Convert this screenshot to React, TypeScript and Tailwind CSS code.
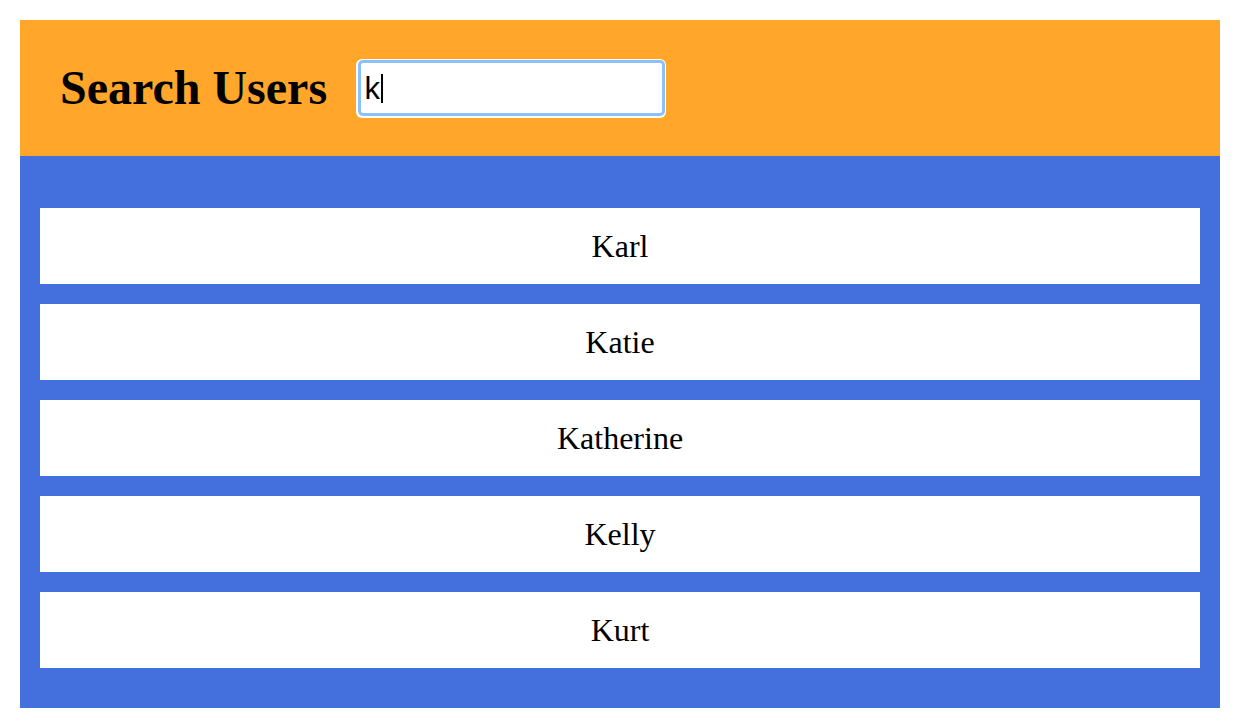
import React from "react";

const names = ["Karl", "Katie", "Katherine", "Kelly", "Kurt"];

export default function App() {
  return (
    <div className="w-[1234px] h-[726px] bg-white p-[20px]" style={{ boxSizing: "border-box" }}>
      <div className="w-[1200px] flex flex-col">
        <div className="h-[136px] bg-[#ffa62b] flex items-center pl-[40px]">
          <h1
            className="text-[48px] font-bold text-black leading-none"
            style={{ fontFamily: '"Liberation Serif", "Times New Roman", serif' }}
          >
            Search Users
          </h1>
          <div className="ml-[29px] w-[310px] h-[59px] rounded-[6px] bg-white p-[1.5px]">
            <div className="w-full h-full rounded-[5px] border-[3.5px] border-[#8cc0f8] bg-white flex items-center pl-[4px]">
              <span
                className="text-[31px] text-black leading-none"
                style={{ fontFamily: '"Liberation Sans", Arial, sans-serif' }}
              >
                k
              </span>
              <span className="ml-[1px] w-[2px] h-[29px] bg-black" />
            </div>
          </div>
        </div>
        <div className="bg-[#4470dd] pt-[52px] pb-[40px] px-[20px] flex flex-col gap-[20px]">
          {names.map((n) => (
            <div
              key={n}
              className="h-[76px] bg-white flex items-center justify-center text-[32px] text-black"
              style={{ fontFamily: '"Liberation Serif", "Times New Roman", serif' }}
            >
              {n}
            </div>
          ))}
        </div>
      </div>
    </div>
  );
}
